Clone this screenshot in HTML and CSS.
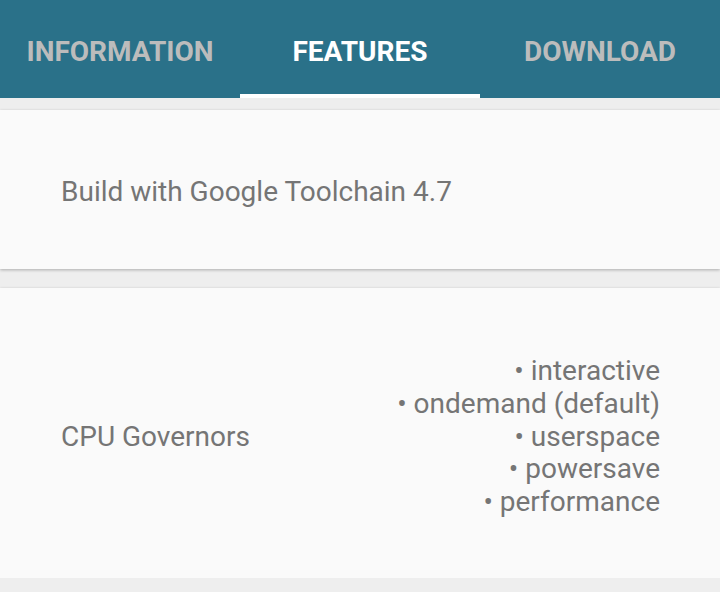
FILE: index.html
```html
<!DOCTYPE html>
<html>
<head>
<meta charset="utf-8">
<link rel="stylesheet" href="styles.css">
</head>
<body>
<div class="tabs">
  <div class="tab">INFORMATION</div>
  <div class="tab active">FEATURES</div>
  <div class="tab">DOWNLOAD</div>
</div>
<div class="content">
  <div class="card card-short">
    <div class="label">Build with Google Toolchain 4.7</div>
  </div>
  <div class="card card-tall">
    <div class="label">CPU Governors</div>
    <div class="values">
      <div>• interactive</div>
      <div>• ondemand (default)</div>
      <div>• userspace</div>
      <div>• powersave</div>
      <div>• performance</div>
    </div>
  </div>
</div>
</body>
</html>
```
FILE: styles.css
```css
html, body {
  margin: 0;
  padding: 0;
  background: #eeeeee;
  font-family: Roboto, "Noto Sans", sans-serif;
  overflow: hidden;
}
.tabs {
  display: grid;
  grid-template-columns: repeat(3, 1fr);
  height: 98px;
  background: #2a7189;
}
.tab {
  display: flex;
  align-items: center;
  justify-content: center;
  font-size: 28px;
  font-weight: 700;
  color: #bcbcbc;
  box-sizing: border-box;
  padding-top: 8px;
  border-bottom: 4px solid transparent;
}
.tab.active {
  color: #ffffff;
  border-bottom-color: #ffffff;
}
.content {
  padding-top: 12px;
  display: flex;
  flex-direction: column;
  gap: 19px;
}
.card {
  box-sizing: border-box;
  background: #fafafa;
  box-shadow: 0 1px 3px rgba(0,0,0,0.28);
  display: flex;
  align-items: center;
  justify-content: space-between;
  padding: 0 60px 0 61px;
  color: #757575;
  font-size: 28px;
}
.card-short {
  height: 159px;
  padding-top: 4px;
}
.card-tall {
  height: 290px;
  padding-top: 6px;
}
.values {
  text-align: right;
  line-height: 32.75px;
  padding-top: 2px;
}
```
